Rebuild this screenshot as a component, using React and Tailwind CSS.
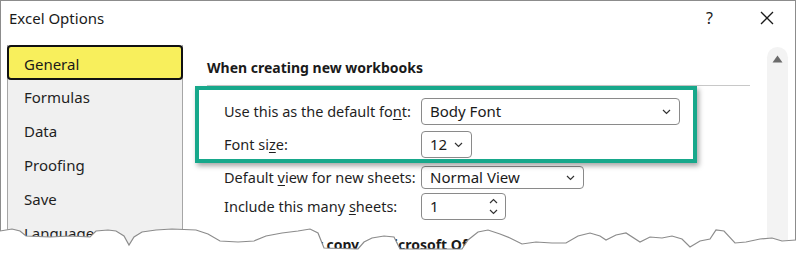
import { useState } from "react";

const NAV = ["General", "Formulas", "Data", "Proofing", "Save", "Language"];

const TEAR = [
  [0, 231], [12, 229], [20, 231], [26, 236], [50, 237], [70, 236], [90, 237], [96, 231],
  [108, 230], [116, 231], [124, 236], [129, 245], [134, 237], [142, 232], [156, 230],
  [172, 229], [196, 230], [208, 234], [220, 241], [238, 242], [254, 241], [266, 236],
  [282, 233], [298, 231], [310, 229], [318, 233], [324, 248], [358, 249], [364, 242],
  [372, 238], [384, 236], [394, 237], [400, 249], [462, 249], [468, 240], [478, 232],
  [488, 230], [500, 234], [510, 238], [522, 244], [536, 242], [552, 243], [566, 243],
  [578, 236], [590, 233], [600, 236], [606, 240], [616, 235], [626, 233], [640, 242],
  [650, 237], [662, 238], [672, 236], [682, 239], [690, 247], [700, 241], [710, 239],
  [716, 230], [724, 231], [735, 243], [746, 242], [760, 239], [772, 238], [782, 241],
  [796, 240],
];

function Chevron({ up = false }) {
  return (
    <svg width="9" height="6" viewBox="0 0 9 6" className="shrink-0">
      <path
        d={up ? "M1 5 L4.5 1.5 L8 5" : "M1 1 L4.5 4.5 L8 1"}
        fill="none"
        stroke="#333"
        strokeWidth="1.2"
      />
    </svg>
  );
}

function Select({ value, w, h }) {
  return (
    <div
      className={`flex items-center justify-between rounded-[4px] border border-[#8a8a8a] bg-white pl-[8px] pr-[8px] ${w} ${h}`}
    >
      <span className="text-[15px] text-[#1a1a1a] leading-none">{value}</span>
      <Chevron />
    </div>
  );
}

function Row({ label, children, h }) {
  return (
    <div className={`flex items-center ${h}`}>
      <div className="w-[197px] text-[14.5px] text-[#1f1f1f]">{label}</div>
      {children}
    </div>
  );
}

export default function App() {
  const [active] = useState("General");
  const pts = TEAR.map((p) => p.join(",")).join(" ");

  return (
    <div
      className="relative w-[796px] h-[260px] overflow-hidden bg-white"
      style={{ fontFamily: "'Noto Sans', 'Open Sans', sans-serif" }}
    >
      <div className="flex flex-col h-full border-l border-t border-r border-[#8c8c8c]">
        {/* Title bar */}
        <div className="flex items-center h-[34px] pl-[8px]">
          <span className="text-[15px] text-[#1a1a1a]">Excel Options</span>
          <span className="ml-auto mr-[47px] text-[16px] text-[#1a1a1a]">?</span>
          <svg width="14" height="14" viewBox="0 0 14 14" className="mr-[21px]">
            <path d="M1 1 L13 13 M13 1 L1 13" stroke="#1a1a1a" strokeWidth="1.3" />
          </svg>
        </div>

        <div className="flex flex-1 pt-[10px]">
          {/* Nav */}
          <div className="ml-[6px] w-[176px] bg-[#f0f0f0] border-l border-r border-[#a6a6a6] flex flex-col">
            {NAV.map((item) =>
              item === active ? (
                <div
                  key={item}
                  className="h-[35px] -mx-px flex items-center pl-[15px] pt-[3px] rounded-[4px] border-2 border-[#111] bg-[#f8ef5c] text-[15px] text-[#1a1a1a]"
                >
                  {item}
                </div>
              ) : (
                <div
                  key={item}
                  className="h-[34px] flex items-center pl-[16px] text-[15px] text-[#1f1f1f]"
                >
                  {item}
                </div>
              )
            )}
          </div>

          {/* Content */}
          <div className="flex-1 flex">
            <div className="flex-1 pl-[24px]">
              <div className="mt-[12px] h-[20px] flex items-center text-[14px] font-bold text-[#1a1a1a]">
                When creating new workbooks
              </div>
              <div className="mt-[8px] w-[543px] border-b border-[#c8c8c8]" />
              <div className="pl-[17px] mt-[12px] flex flex-col">
                <Row
                  h="h-[27px]"
                  label={
                    <>
                      Use this as the default fo<span className="underline underline-offset-2">n</span>t:
                    </>
                  }
                >
                  <Select value="Body Font" w="w-[259px]" h="h-[27px]" />
                </Row>
                <Row
                  h="h-[27px] mt-[6px]"
                  label={
                    <>
                      Font si<span className="underline underline-offset-2">z</span>e:
                    </>
                  }
                >
                  <Select value="12" w="w-[51px]" h="h-[27px]" />
                </Row>
                <Row
                  h="h-[23px] mt-[8px]"
                  label={
                    <>
                      Default <span className="underline underline-offset-2">v</span>iew for new sheets:
                    </>
                  }
                >
                  <Select value="Normal View" w="w-[163px]" h="h-[23px]" />
                </Row>
                <Row
                  h="h-[27px] mt-[4px]"
                  label={
                    <>
                      Include this many <span className="underline underline-offset-2">s</span>heets:
                    </>
                  }
                >
                  <div className="flex items-center justify-between w-[85px] h-[27px] rounded-[4px] border border-[#8a8a8a] pl-[8px] pr-[7px]">
                    <span className="text-[15px] text-[#1a1a1a] leading-none">1</span>
                    <div className="flex flex-col gap-[5px]">
                      <Chevron up />
                      <Chevron />
                    </div>
                  </div>
                </Row>
              </div>
              <div className="mt-[14px] text-[14px] font-bold text-[#1a1a1a]">
                Personalize your copy of Microsoft Office
              </div>
            </div>

            {/* Scrollbar */}
            <div className="w-[21px] mr-[7px] mt-[2px] rounded-t-full bg-[#f3f3f3] flex justify-center pt-[8px]">
              <svg width="11" height="8" viewBox="0 0 11 8">
                <path d="M5.5 0.5 L10.5 7.5 L0.5 7.5 Z" fill="#6b6b6b" />
              </svg>
            </div>
          </div>
        </div>
      </div>

      {/* Annotation highlight */}
      <div className="absolute left-[195px] top-[86px] w-[502px] h-[77px] border-4 border-[#17a88b] shadow-[2px_3px_5px_rgba(0,0,0,0.35)]" />

      {/* Torn paper edge */}
      <svg className="absolute left-0 top-0" width="796" height="260" viewBox="0 0 796 260">
        <polygon points={`${pts} 796,260 0,260`} fill="#fff" />
        <polyline points={pts} fill="none" stroke="#8c8c8c" strokeWidth="1.2" />
      </svg>
    </div>
  );
}
